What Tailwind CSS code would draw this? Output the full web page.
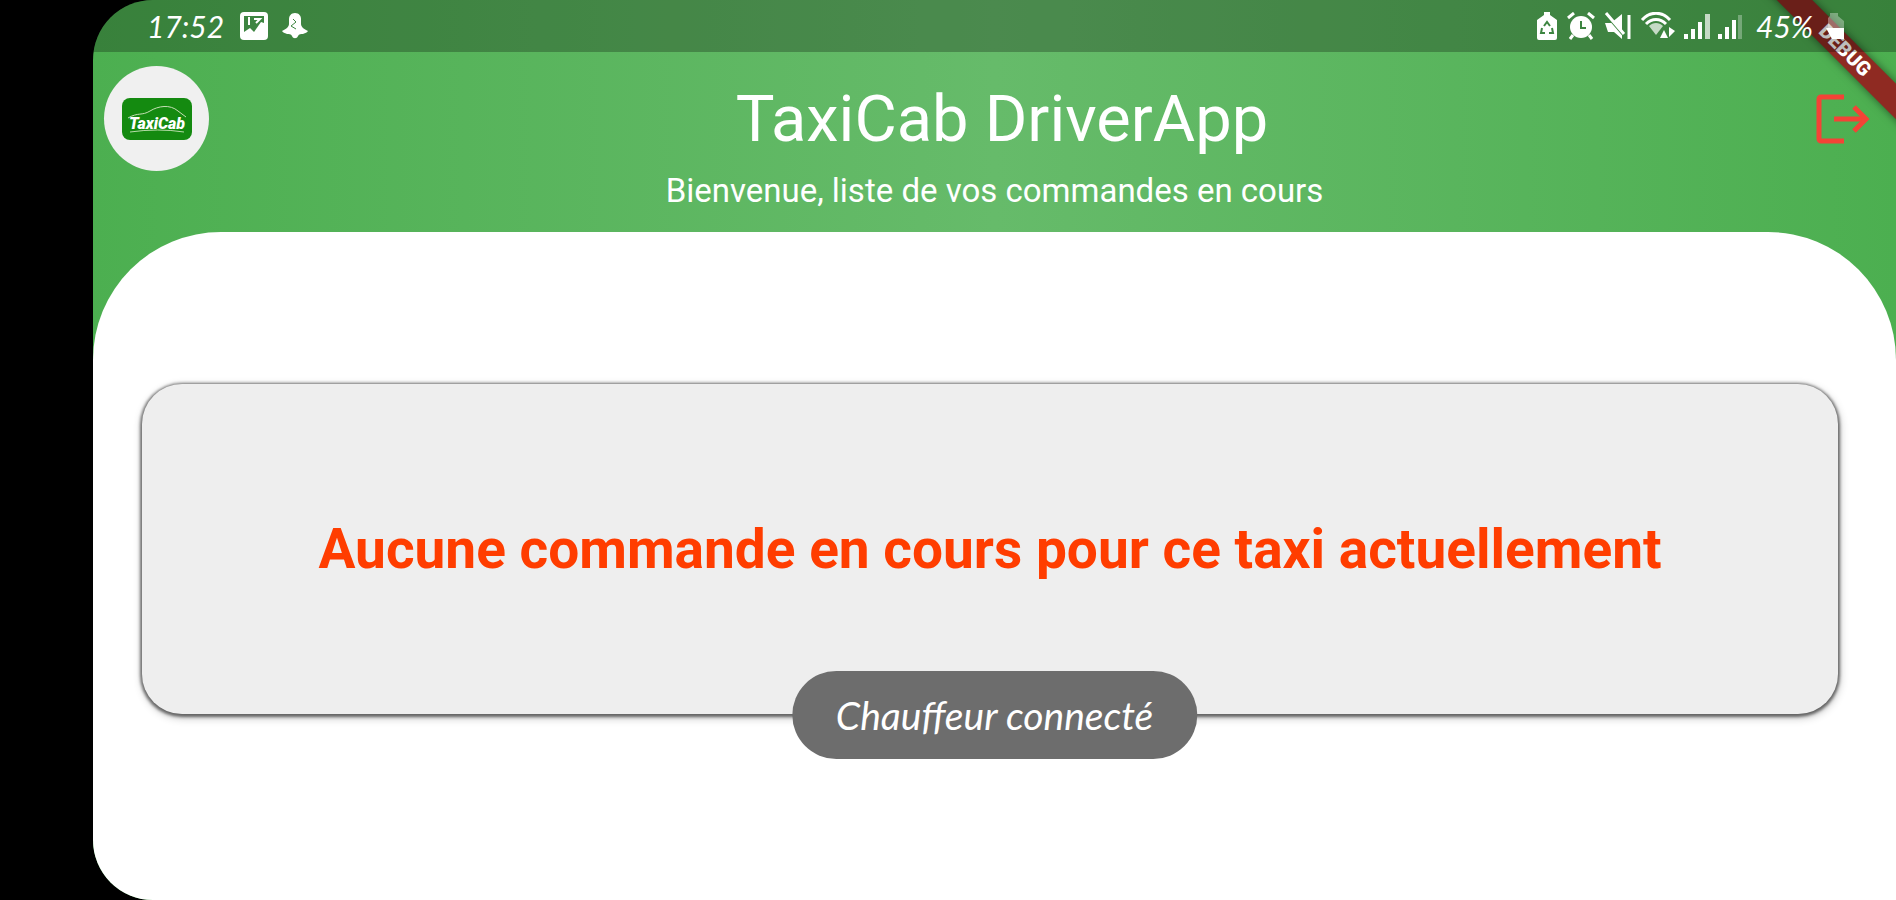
<!DOCTYPE html>
<html lang="fr">
<head>
  <meta charset="UTF-8" />
  <meta name="viewport" content="width=device-width, initial-scale=1.0"/>
  <title>TaxiCab DriverApp</title>
  <script src="https://cdn.jsdelivr.net/npm/@tailwindcss/browser@4"></script>
</head>
<body class="bg-black pl-[93px] font-[Roboto,sans-serif]">

  <div class="relative min-h-screen flex flex-col overflow-hidden rounded-l-[60px] bg-linear-to-r from-[#4caf50] via-[#66bb6a] to-[#4caf50]">

    <!-- Bandeau debug -->
    <div class="absolute top-[38px] -right-[69px] w-[240px] h-[25px] rotate-45 bg-[#8f2a22] shadow-[0_0_8px_rgba(0,0,0,0.5)] text-white text-[20px] leading-[25px] font-black text-center">DEBUG</div>

    <!-- Barre d'etat -->
    <div class="relative h-[52px] pl-[54px] pr-[50px] flex items-center justify-between bg-black/26 text-white">
      <div class="flex items-center gap-3">
        <span class="w-[80px] font-[Lato,sans-serif] italic text-[30px] leading-8">17:52</span>
        <svg class="w-[30px] h-[30px]" viewBox="0 0 30 30">
          <rect x="1" y="1" width="28" height="28" rx="4" fill="#fff"/>
          <path d="M5 5h20v7l-3-1-7 10-4-4-6 4z" fill="#3d8541"/>
          <path d="M10 6v8M15 8h6l-4 4" stroke="#fff" stroke-width="2" fill="none"/>
        </svg>
        <svg class="w-[28px] h-[28px]" viewBox="0 0 28 28" fill="#fff">
          <path d="M14 1c4 0 6 3 6 6v5c0 3 3 5 7 7-1 2-4 2-5 3-2 0-4 0-5 2-1 3-5 3-6 0-1-2-3-2-5-2-1-1-4-1-5-3 4-2 7-4 7-7V7c0-3 2-6 6-6z"/>
          <path d="M12 7l3 3-5 4 5 3" stroke="#3d8541" stroke-width="1" fill="none"/>
        </svg>
      </div>
      <div class="flex items-center gap-2">
        <svg class="w-[22px] h-[28px]" viewBox="0 0 22 28">
          <path d="M8 0h6v3l7 5v18a2 2 0 0 1-2 2H3a2 2 0 0 1-2-2V8l7-5z" fill="#fff"/>
          <path d="M8 14l3-4 3 4M6 16l-1 5h4M16 16l1 5h-4" stroke="#3d8541" stroke-width="2" fill="none"/>
        </svg>
        <svg class="w-[30px] h-[28px]" viewBox="0 0 30 28">
          <path d="M2 6l6-5M28 6l-6-5M7 23l-3 4M23 23l3 4" stroke="#fff" stroke-width="3"/>
          <circle cx="15" cy="15" r="11" fill="#fff"/>
          <path d="M15 9v7h5" stroke="#3d8541" stroke-width="2" fill="none"/>
        </svg>
        <svg class="w-[28px] h-[28px]" viewBox="0 0 28 28" fill="#fff">
          <path d="M1 11h6l11-9v25l-8-7H4z"/>
          <path d="M2 3l18 21" stroke="#3d8541" stroke-width="2"/>
          <path d="M2 1l18 21M25 3v24" stroke="#fff" stroke-width="3"/>
        </svg>
        <svg class="w-[36px] h-[28px]" viewBox="0 0 36 28" fill="none" stroke="#fff">
          <path d="M2 8c8-9 20-9 28 0M6 12c6-6 14-6 20 0" stroke-width="3"/>
          <path d="M9 14c4-4 10-4 14 0l-7 9z" fill="#fff" fill-opacity=".7" stroke="none"/>
          <path d="M20 26l4-8 4 8zM29 15l6 4-6 6z" fill="#fff" stroke="none"/>
        </svg>
        <svg class="w-[26px] h-[28px]" viewBox="0 0 26 28" fill="#fff">
          <path d="M0 22h4v5H0zM7 17h4v10H7zM14 10h4v17h-4z"/>
          <path d="M21 2h5v25h-5z" fill-opacity=".7"/>
        </svg>
        <svg class="w-[26px] h-[28px]" viewBox="0 0 26 28" fill="#fff">
          <path d="M0 22h4v5H0zM7 15h4v12H7zM14 8h4v19h-4z"/>
          <path d="M20 3h4v24h-4z" fill-opacity=".3"/>
        </svg>
        <div class="pl-1 flex items-center">
          <span class="w-[66px] font-[Lato,sans-serif] italic text-[30px] leading-8">45%</span>
          <svg class="w-[24px] h-[28px]" viewBox="0 0 24 28" fill="#fff">
            <path d="M8 1h8v3l6 5v7H6V6l2-2z" fill-opacity=".35"/>
            <path d="M4 16h18v11H10z"/>
          </svg>
        </div>
      </div>
    </div>

    <!-- En-tete -->
    <header class="grid grid-cols-[105px_1fr_90px] items-center px-[11px] pt-[14px] pb-[21px] text-white text-center">
      <div class="size-[105px] rounded-full bg-[#f0f0f0] flex items-center justify-center">
        <svg class="w-[70px] h-[42px]" viewBox="0 0 70 42" role="img" aria-label="TaxiCab">
          <rect width="70" height="42" rx="8" fill="#148a10"/>
          <path d="M6 20c10-6 14-2 22-7s20-7 28 0l8 6" stroke="#c5dfb4" stroke-width="1" fill="none"/>
          <path d="M8 34q28-4 54 0" stroke="#b6dca8" stroke-width="1" fill="none"/>
          <text x="35" y="31" text-anchor="middle" font-family="Roboto, sans-serif" font-size="16" font-weight="900" font-style="italic" fill="#fff">TaxiCab</text>
        </svg>
      </div>
      <h1 class="text-[65px] leading-[80px]">TaxiCab DriverApp</h1>
      <button aria-label="Se déconnecter" class="justify-self-end mr-[15px]">
        <svg class="w-[54px] h-[50px]" viewBox="0 0 54 50" fill="none" stroke="#f44336" stroke-width="5">
          <path d="M28 3H5a2 2 0 0 0-2 2v40a2 2 0 0 0 2 2h23"/>
          <path d="M18 25h30"/>
          <path d="M38 13l12 12-12 12"/>
        </svg>
      </button>
      <p class="col-span-3 text-[33px] leading-[40px]">Bienvenue, liste de vos commandes en cours</p>
    </header>

    <!-- Liste des commandes -->
    <main class="flex-1 rounded-t-[128px] bg-white pt-[152px] pl-[49px] pr-[58px]">
      <div class="rounded-[40px] bg-[#eeeeee] py-[133px] shadow-[0_1px_3px_2px_rgba(0,0,0,0.5),1px_3px_10px_0_rgba(0,0,0,0.3)]">
        <p class="text-center text-[55px] leading-[64px] font-bold text-[#ff3d00]">Aucune commande en cours pour ce taxi actuellement</p>
      </div>
    </main>

    <!-- Toast -->
    <div role="status" class="absolute left-1/2 bottom-[141px] -translate-x-1/2 rounded-full bg-[#6d6d6d] px-[44px] text-white font-[Lato,sans-serif] italic text-[39px] leading-[88px] whitespace-nowrap">Chauffeur connecté</div>
  </div>

</body>
</html>
